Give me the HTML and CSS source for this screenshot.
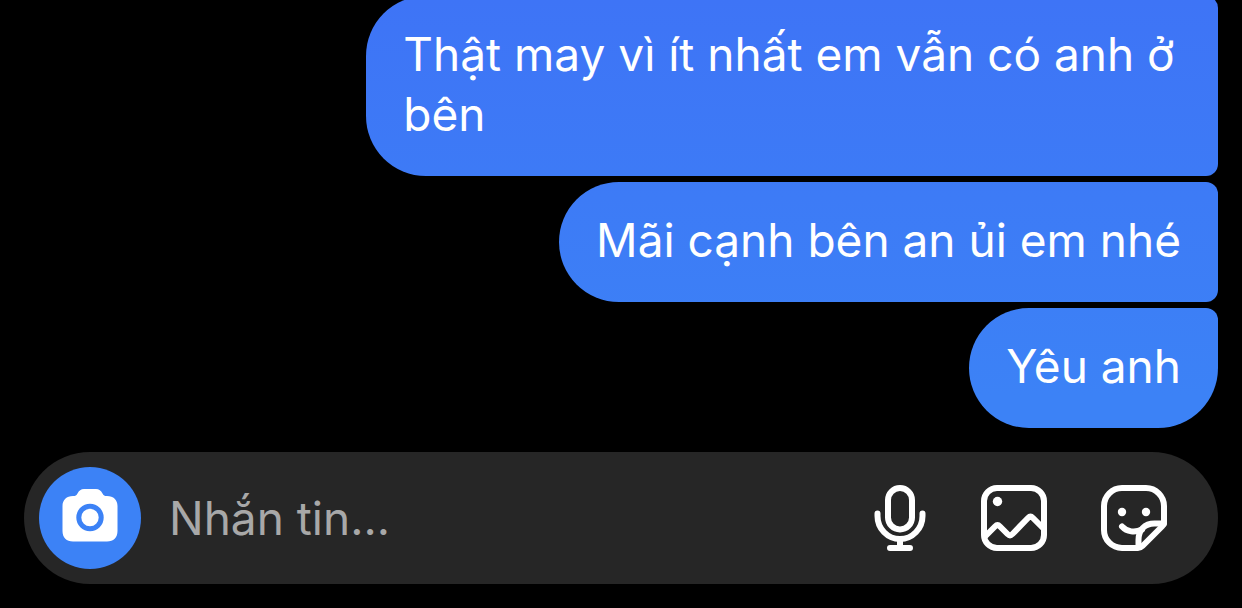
FILE: index.html
```html
<!DOCTYPE html>
<html lang="vi">
<head>
  <meta charset="UTF-8">
  <meta name="viewport" content="width=device-width, initial-scale=1">
  <title>Tin nhắn</title>
  <link rel="stylesheet" href="styles.css">
</head>
<body>

<main class="chat">
  <div class="messages">
    <p class="bubble">Thật may vì ít nhất em vẫn có anh ở bên</p>
    <p class="bubble">Mãi cạnh bên an ủi em nhé</p>
    <p class="bubble bubble-last">Yêu anh</p>
  </div>

  <form class="composer">
    <button type="button" class="camera" aria-label="Máy ảnh">
      <svg width="56" height="60" viewBox="0 0 56 60">
        <path fill="#fff" d="M11 8c2.500 0 3.500-.5 4.500-2.500C17 2.500 19 1 22 1h12c3 0 5 1.500 6.500 4.500C41.500 7.500 42.500 8 45 8c6.500 0 10.500 4 10.500 10v25c0 6.500-4 10.500-10.500 10.500H11C4.500 53.500.5 49.500.5 43V18C.5 12 4.500 8 11 8z"/>
        <circle cx="28" cy="29.500" r="11.200" fill="none" stroke="#3c82f6" stroke-width="5"/>
      </svg>
    </button>
    <input type="text" class="message-input" placeholder="Nhắn tin..." aria-label="Nhắn tin">
    <div class="actions">
      <button type="button" class="action" aria-label="Ghi âm">
        <svg class="icon" width="53" height="66" viewBox="0 0 53 66">
          <rect x="14" y="3" width="24" height="41.500" rx="12"/>
          <path d="M3.500 28.500v2.500a22.500 23 0 0 0 45 0v-2.500M26 54v9M16 63h20"/>
        </svg>
      </button>
      <button type="button" class="action" aria-label="Thư viện ảnh">
        <svg class="icon" width="66" height="66" viewBox="0 0 66 66">
          <rect x="3" y="3" width="60" height="60" rx="13"/>
          <path d="M4 51.500 14 41.500q2.500-2.500 5 0l7.500 7.500q2.500 2.500 5 0L47 33q2.500-2.500 5 0l11 11"/>
          <circle class="dot" cx="16.500" cy="16.500" r="4.700"/>
        </svg>
      </button>
      <button type="button" class="action" aria-label="Nhãn dán">
        <svg class="icon" width="66" height="66" viewBox="0 0 66 66">
          <path d="M63 37V21A18 18 0 0 0 45 3H21A18 18 0 0 0 3 21v24a18 18 0 0 0 18 18h16q2.500 0 4.500-2L61 41.500q2-2 2-4.500z"/>
          <path d="M37.500 62v-7c0-10 6-16.500 16-16.500H63"/>
          <path d="M21 41.500c5 5.500 13 6.500 20 3"/>
          <circle class="dot" cx="21" cy="27" r="4.200"/>
          <circle class="dot" cx="45" cy="27" r="4.200"/>
        </svg>
      </button>
    </div>
  </form>
</main>

</body>
</html>
```
FILE: styles.css
```css
* {
  box-sizing: border-box;
}

body {
  margin: 0;
  background: #000;
  color: #fff;
  font-family: Inter, 'Liberation Sans', sans-serif;
  font-size: 46px;
  line-height: 60px;
}

.chat {
  display: flex;
  flex-direction: column;
  justify-content: flex-end;
  gap: 24px;
  height: 100vh;
  padding: 0 24px 24px;
  overflow: hidden;
}

.messages {
  display: flex;
  flex-direction: column;
  align-items: flex-end;
  gap: 6px;
}

.bubble {
  max-width: calc(72% - 8px);
  margin: 0;
  padding: 28px 37px 32px;
  border-radius: 60px 12px 12px 60px;
  background: linear-gradient(#3e74f6, #3c82f6 65%) fixed;
}

.bubble-last {
  border-bottom-right-radius: 60px;
}

.composer {
  display: flex;
  align-items: center;
  padding: 15px 51px 15px 15px;
  border-radius: 66px;
  background: #262626;
}

button {
  display: flex;
  align-items: center;
  justify-content: center;
  flex-shrink: 0;
  padding: 0;
  border: none;
  background: none;
  cursor: pointer;
}

.camera {
  width: 102px;
  height: 102px;
  border-radius: 50%;
  background: #3c82f6;
}

.message-input {
  flex: 1;
  min-width: 0;
  padding: 0 28px;
  border: none;
  outline: none;
  background: none;
  color: #fff;
  font: inherit;
}

.message-input::placeholder {
  color: #a8a8a8;
  opacity: 1;
}

.actions {
  display: flex;
  gap: 54px;
}

.icon {
  fill: none;
  stroke: #fff;
  stroke-width: 6;
  stroke-linecap: round;
  stroke-linejoin: round;
}

.icon .dot {
  fill: #fff;
  stroke: none;
}
```
